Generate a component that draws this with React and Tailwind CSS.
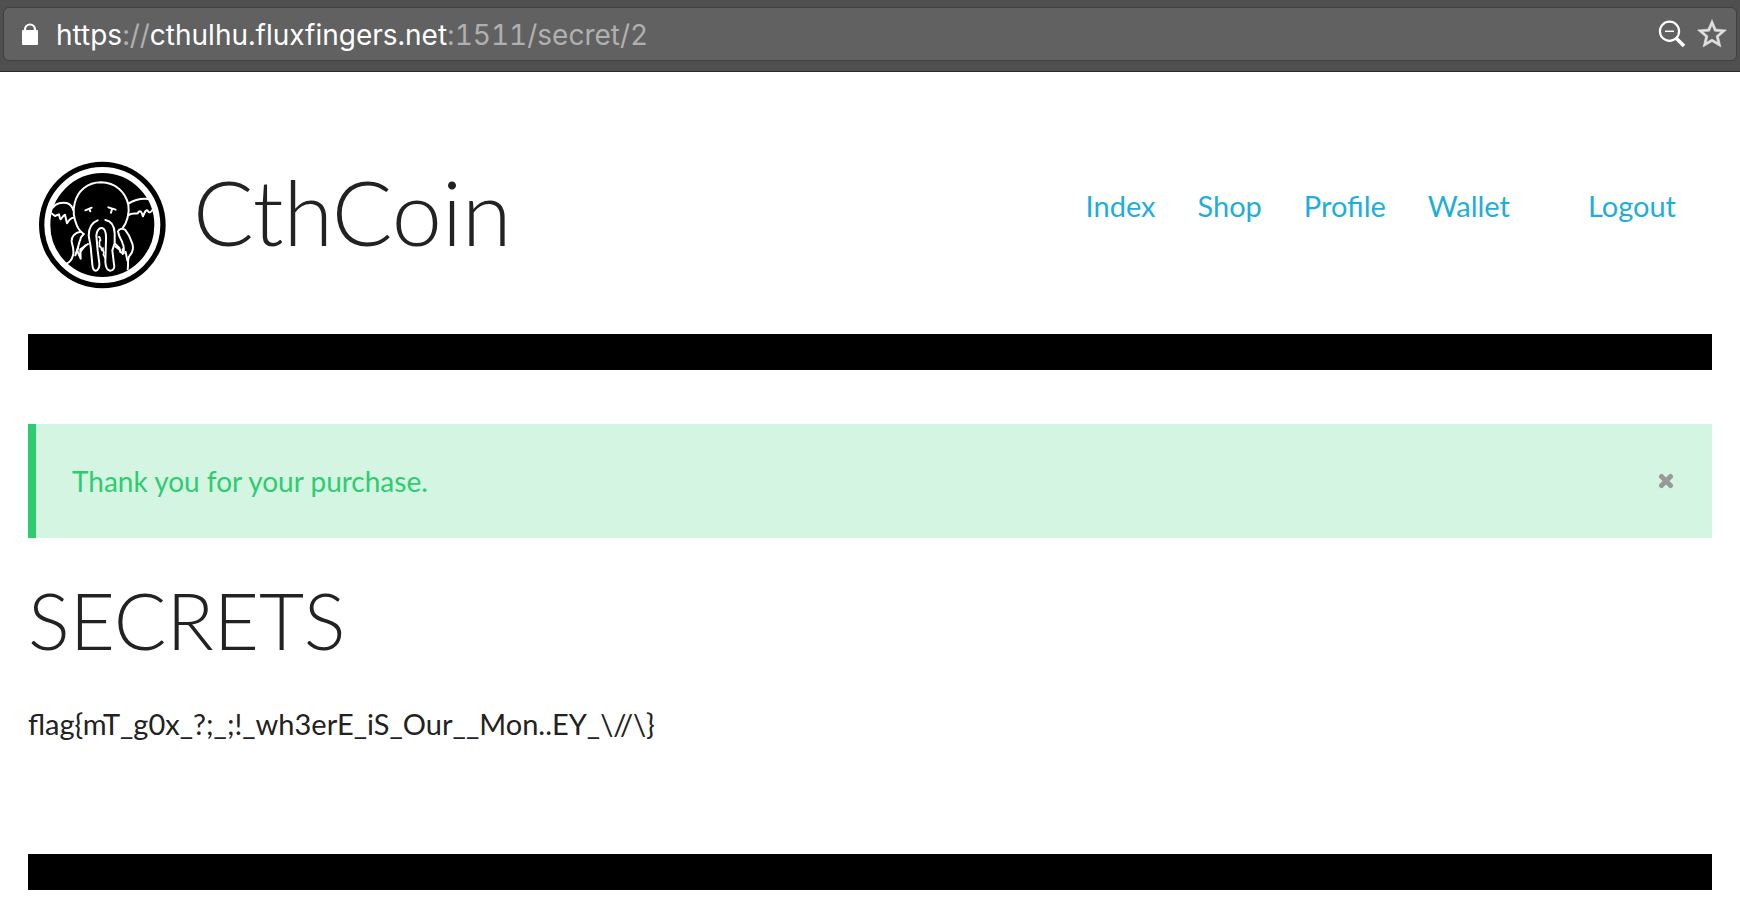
import { useState } from 'react';

const navLinks = ['Index', 'Shop', 'Profile', 'Wallet'];

const AddressBar = () => (
  <div className="h-[72px] bg-[#4f4f4f] border-b border-[#2a2829] px-[3px] pt-[7px]">
    <div className="h-[54px] flex items-center justify-between rounded-md border border-[#3f3f3f] bg-[#616161] pl-4 pr-2 font-['Inter',sans-serif]">
      <div className="flex items-center gap-4">
        <svg className="w-5 h-7" viewBox="0 0 20 28" aria-hidden="true">
          <path d="M5 12V9.500a5 5 0 0 1 10 0V12" fill="none" stroke="#fff" strokeWidth="2.200" />
          <rect x="2" y="10" width="16" height="15" rx="1" fill="#fff" />
        </svg>
        <p className="pt-0.5 text-[28px] leading-9 tabular-nums text-[#b0b0b0]">
          <span className="text-white">https</span>://
          <span className="text-white">cthulhu.fluxfingers.net</span>:1511/secret/2
        </p>
      </div>
      <div className="flex items-center gap-2">
        <button type="button" aria-label="Zoom" className="size-8">
          <svg viewBox="0 0 32 32" fill="none" stroke="#fff">
            <circle cx="13.500" cy="13.300" r="9.600" strokeWidth="2.200" />
            <path d="M9 13.300h9" strokeWidth="1.500" />
            <path d="M20.500 20.500l7.500 7.500" strokeWidth="3.500" />
          </svg>
        </button>
        <button type="button" aria-label="Bookmark this page" className="size-8">
          <svg viewBox="1 1 22 22" fill="#e0e0e0" stroke="#e0e0e0" strokeWidth="0.300">
            <path d="M22 9.240l-7.190-.620L12 2 9.190 8.630 2 9.240l5.460 4.730L5.820 21 12 17.270 18.180 21l-1.630-7.030L22 9.240zM12 15.400l-3.760 2.270 1-4.280-3.320-2.880 4.380-.380L12 6.100l1.710 4.040 4.380.380-3.320 2.880 1 4.280L12 15.400z" />
          </svg>
        </button>
      </div>
    </div>
  </div>
);

const Logo = () => (
  <svg className="size-[130px]" viewBox="50 30 390 390" fill="none" stroke="#fff" strokeLinecap="round" strokeLinejoin="round" aria-hidden="true">
    <circle cx="246" cy="225" r="190" fill="#000" stroke="none" />
    <circle cx="246" cy="225" r="165" strokeWidth="18" />
    <g strokeWidth="6">
      {/* head */}
      <path d="M190 252C182 246 172 236 168 222C161 205 158 180 163 160C171 124 201 97 242 97C285 98 315 125 324 164C328 189 320 218 307 234" />
      {/* ears */}
      <path d="M98 172C106 160 124 156 139 159C150 163 157 171 159 181" />
      <path d="M95 191L104 198L116 193C118 200 118 207 121 208C125 204 129 195 134 194L140 220C145 212 148 204 159 203" />
      <path d="M324 161C340 151 363 145 383 147" />
      <path d="M326 195C332 189 345 192 352 190C360 178 363 184 368 199C373 187 376 179 381 181C386 190 390 190 399 176" />
      {/* eyes */}
      <path d="M195 181L214 173M207 177L210 184M264 172L286 179M275 177L272 188" />
      {/* tentacles */}
      <path d="M232 211C213 218 205 235 205 257L211 290L216 344C217 356 221 362 226 362C234 361 238 350 237 340L232 302L228 257C230 240 236 233 245 234C255 236 258 248 257 270L255 336C256 351 261 361 269 362C278 362 284 355 281 343L276 301L283 280L283 250C282 230 274 213 255 210" />
      <path d="M190 252C184 261 180 260 180 269C175 278 173 294 171 303L181 326L180 298L203 282" />
      <path d="M181 245C163 247 153 260 154 275C158 290 162 304 158 316C155 327 150 337 140 340" />
      <path d="M173 292L165 316M181 304L195 286" />
      <path d="M293 244C297 236 306 235 314 239C325 252 330 264 334 276C341 290 338 307 328 317C320 326 325 342 322 358" />
      <path d="M294 248C296 264 306 270 307 281C312 290 311 299 310 310L300 306L297 294L284 281" />
      <path d="M286 290L299 300M307 298L307 312M316 306L321 332" />
      <path d="M235 261C241 259 237 269 241 270C232 276 241 282 237 289C247 291 240 296 245 301M248 294C245 303 254 304 249 314L255 324" strokeWidth="5" />
    </g>
  </svg>
);

const App = () => {
  const [showAlert, setShowAlert] = useState(true);

  return (
    <div className="bg-white text-[29px] leading-9 text-[#222] font-['Lato',sans-serif]">
      <AddressBar />

      <div className="px-7 pb-4">
        <header className="flex items-start justify-between pt-[88px] pb-11 pl-[9px] pr-9">
          <div className="flex items-start gap-[26px]">
            <Logo />
            <h1 className="text-[90px] leading-[102px] font-light">CthCoin</h1>
          </div>
          <nav className="flex gap-[42px] pt-7 text-[#1eaedb]">
            {navLinks.map((label) => (
              <a key={label} href="#">{label}</a>
            ))}
            <a href="#" className="ml-9">Logout</a>
          </nav>
        </header>

        <div className="h-9 bg-black" />

        <main className="pt-[54px] pb-28">
          {showAlert && (
            <div role="status" className="h-[114px] flex items-center justify-between border-l-8 border-[#2ecc71] bg-[#d5f5e3] pl-9 pr-[38px] text-[#2ecc71]">
              <p className="text-[28px]">Thank you for your purchase.</p>
              <button type="button" aria-label="Close" onClick={() => setShowAlert(false)}>
                <svg className="size-4" viewBox="0 0 16 16" stroke="#999" strokeWidth="5" strokeLinecap="round">
                  <path d="M3.500 3.500l9 9M12.500 3.500l-9 9" />
                </svg>
              </button>
            </div>
          )}
          <h2 className="mt-9 text-[78px] leading-[92px] font-light">SECRETS</h2>
          <p className="mt-10">{'flag{mT_g0x_?;_;!_wh3erE_iS_Our__Mon..EY_\\//\\}'}</p>
        </main>

        <footer className="h-9 bg-black" />
      </div>
    </div>
  );
};

export default App;
